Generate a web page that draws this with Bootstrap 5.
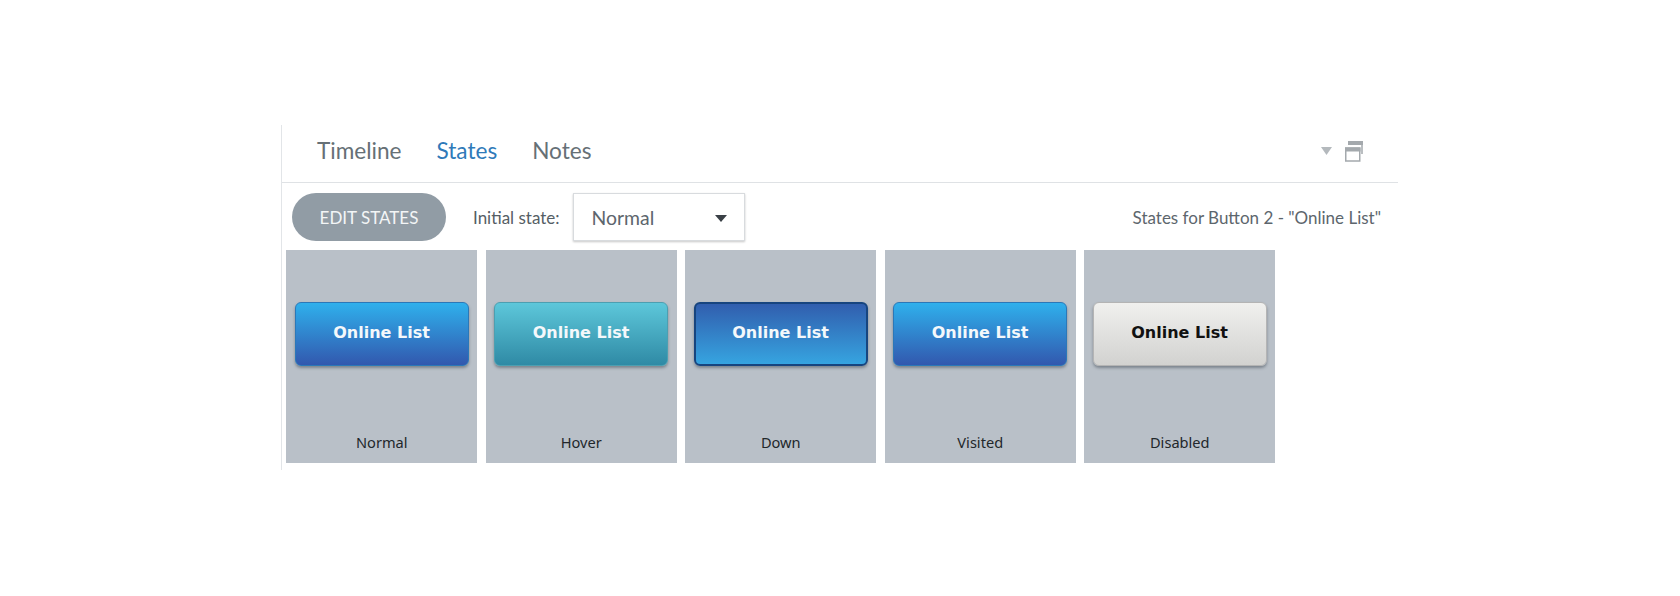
<!DOCTYPE html>
<html lang="en">
<head>
<meta charset="utf-8">
<title>States</title>
<link href="https://cdn.jsdelivr.net/npm/bootstrap@5.3.0/dist/css/bootstrap.min.css" rel="stylesheet">
<style>
html,body{height:596px;overflow:hidden;background:#fff}
.panel-wrap{margin:125px 0 0 281px;width:1117px;height:345px;border-left:1px solid #e2e5e8}
.tab-bar{height:58px;border-bottom:1px solid #dfe2e5;padding:0 35px 5px 35px}
.tab-link{font:400 22.6px/1 Lato,"Noto Sans",sans-serif;color:#667076;margin-right:35px;text-decoration:none}
.tab-link.on{color:#2f7ab9}
.tool-bar{height:67px;padding:16px 17px 15px 10px}
.pill-btn{width:154px;height:48px;border-radius:24px;background:#919ca5;border:0;color:#f3f5f6;font:400 17px/1 Lato,"Noto Sans",sans-serif;padding:0}
.init-label{font:400 17px/1 Lato,"Noto Sans",sans-serif;color:#555e65;margin:0 13px 0 27px}
.state-select{width:172px;height:48px;border:1px solid #d8dbde;box-shadow:0 1px 2px rgba(0,0,0,.22);padding:2px 17px 0 18px;color:#5d666d;font:400 19.4px/1 Lato,"Noto Sans",sans-serif;background:#fff}
.caret-down{width:0;height:0;border-left:6px solid transparent;border-right:6px solid transparent;border-top:7px solid #3a4046}
.state-title{font:400 17px/1 Lato,"Noto Sans",sans-serif;color:#5d666d}
.tile-row{gap:8.5px;padding-left:4px}
.state-tile{width:191px;height:213px;background:#b9c0c8;padding:52px 8px 0 8.500px}
.state-btn{width:174px;height:64px;border-radius:6px;font:700 16px/1 "DejaVu Sans",sans-serif;border:1px solid transparent;color:#f4f8fb;padding:0 0 2px;box-shadow:0 2px 3px rgba(50,60,70,.45)}
.is-normal{background:linear-gradient(#2fb0ec,#3258ae);border-color:#2b78b8}
.is-hover{background:linear-gradient(#5dc7da,#2f8aa5);border-color:#4c9fb1}
.is-down{background:linear-gradient(#315eae,#36a4e0);border:2px solid #17457f}
.is-off{background:linear-gradient(#f0f0ee,#d2d2d0);border-color:#b4b4b4;color:#111}
.tile-cap{font:400 14.6px/1 "Noto Sans",sans-serif;color:#22272b;text-align:center;margin-top:69px}
.win-icon{display:block;margin-left:13px}
</style>
</head>
<body>
<div class="panel-wrap">
  <div class="tab-bar d-flex align-items-center">
    <a class="tab-link" href="#">Timeline</a>
    <a class="tab-link on" href="#">States</a>
    <a class="tab-link" href="#">Notes</a>
    <div class="ms-auto d-flex align-items-center">
      <svg width="11" height="8" viewBox="0 0 11 8"><path d="M0 0h11L5.500 8z" fill="#b4b9bd"/></svg>
      <svg class="win-icon" width="18" height="21" viewBox="0 0 18 21"><path d="M3 1h14v12" fill="none" stroke="#a4a9ad" stroke-width="1.500"/><rect x="3" y="0" width="15" height="4" fill="#a4a9ad"/><rect x=".75" y="7" width="14" height="13" fill="#fff" stroke="#a4a9ad" stroke-width="1.500"/><rect x="0" y="6.500" width="15.500" height="4" fill="#a4a9ad"/></svg>
    </div>
  </div>
  <div class="tool-bar d-flex align-items-center">
    <button class="pill-btn" type="button">EDIT STATES</button>
    <span class="init-label">Initial state:</span>
    <div class="state-select d-flex align-items-center justify-content-between"><span>Normal</span><span class="caret-down"></span></div>
    <span class="state-title ms-auto">States for Button 2 - "Online List"</span>
  </div>
  <div class="tile-row d-flex">
    <div class="state-tile"><button class="state-btn is-normal" type="button">Online List</button><div class="tile-cap">Normal</div></div>
    <div class="state-tile"><button class="state-btn is-hover" type="button">Online List</button><div class="tile-cap">Hover</div></div>
    <div class="state-tile"><button class="state-btn is-down" type="button">Online List</button><div class="tile-cap">Down</div></div>
    <div class="state-tile"><button class="state-btn is-normal" type="button">Online List</button><div class="tile-cap">Visited</div></div>
    <div class="state-tile"><button class="state-btn is-off" type="button">Online List</button><div class="tile-cap">Disabled</div></div>
  </div>
</div>
<script src="https://cdn.jsdelivr.net/npm/bootstrap@5.3.0/dist/js/bootstrap.bundle.min.js"></script>
</body>
</html>
